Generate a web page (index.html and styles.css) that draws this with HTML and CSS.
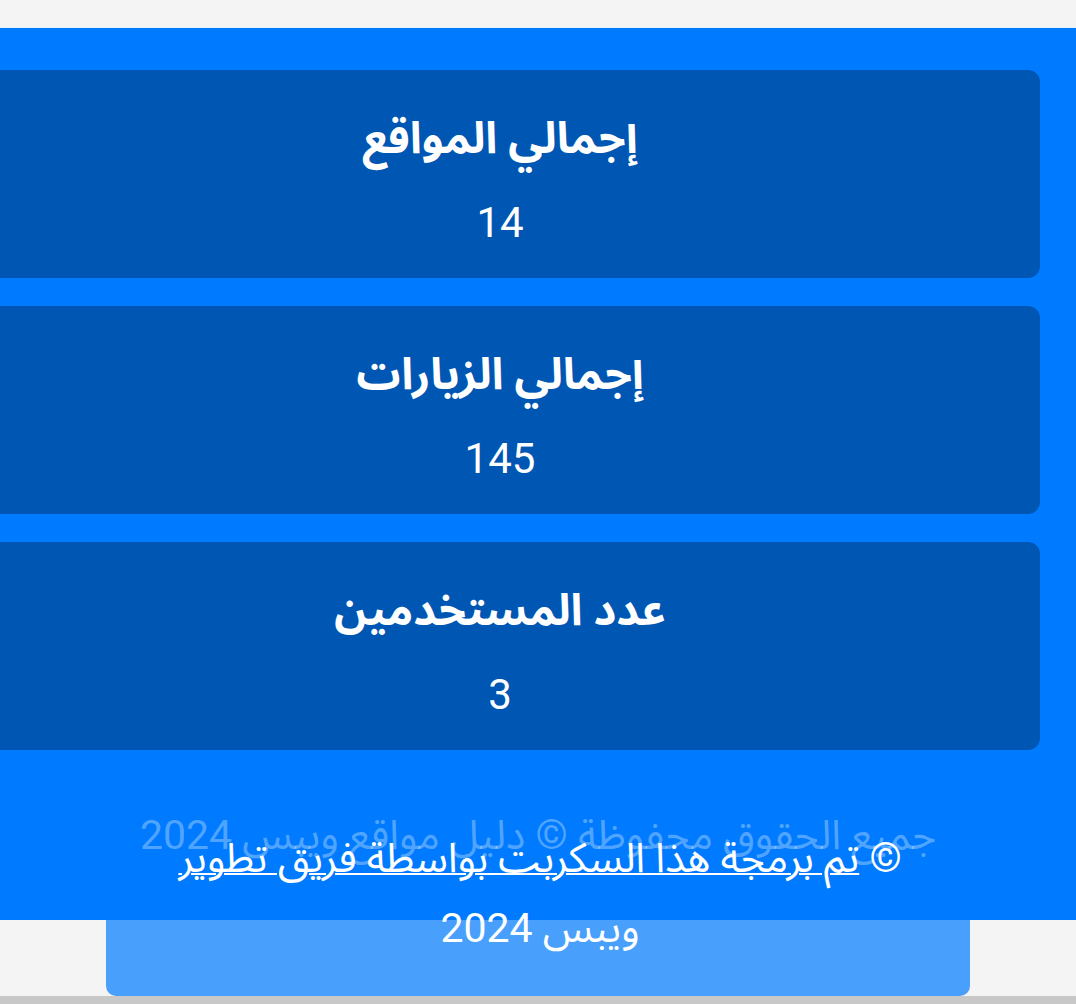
FILE: index.html
```html
<!DOCTYPE html>
<html lang="ar" dir="rtl">
<head>
<meta charset="utf-8">
<title>إحصائيات</title>
<link rel="stylesheet" href="styles.css">
</head>
<body>
<div class="topbar"></div>
<main class="stats">
  <div class="card">
    <h3 class="card-title">إجمالي المواقع</h3>
    <p class="card-value">14</p>
  </div>
  <div class="card">
    <h3 class="card-title">إجمالي الزيارات</h3>
    <p class="card-value">145</p>
  </div>
  <div class="card">
    <h3 class="card-title">عدد المستخدمين</h3>
    <p class="card-value">3</p>
  </div>
  <p class="rights">جميع الحقوق محفوظة © دليل مواقع ويبس 2024</p>
</main>
<div class="footer-wrap">
  <div class="footer-box"></div>
  <p class="credit">© <a href="#" class="credit-link">تم برمجة هذا السكربت بواسطة فريق تطوير</a> ويبس 2024</p>
</div>
<div class="bottombar"></div>
</body>
</html>
```

FILE: styles.css
```css
html, body {
  margin: 0;
  padding: 0;
}
body {
  background: #f4f4f4;
  font-family: Roboto, "Noto Sans Arabic", "Noto Naskh Arabic", "DejaVu Sans", sans-serif;
  color: #fff;
  overflow: hidden;
  height: 1004px;
}
.topbar {
  height: 27px;
  border-bottom: 1px solid #e4f2fa;
  background: #f4f4f4;
}
.stats {
  background: #007bff;
  padding: 42px 36px 0 0;
  height: 892px;
  box-sizing: border-box;
  display: flex;
  flex-direction: column;
  gap: 28px;
  overflow: hidden;
}
.card {
  background: #0056b3;
  border-radius: 12px;
  height: 208px;
  flex-shrink: 0;
  margin-left: -40px;
  display: flex;
  flex-direction: column;
  align-items: center;
  box-sizing: border-box;
  padding-top: 36px;
}
.card-title {
  margin: 0;
  font-size: 44px;
  font-weight: 700;
  line-height: 64px;
}
.card-value {
  margin: 28px 0 0;
  font-size: 42px;
  line-height: 50px;
}
.rights {
  margin: 32px -36px 0 0;
  text-align: center;
  font-size: 41px;
  line-height: 50px;
  color: rgba(255, 255, 255, 0.33);
}
.footer-wrap {
  position: relative;
  height: 76px;
  display: flex;
  justify-content: center;
}
.footer-box {
  width: 864px;
  height: 76px;
  background: rgba(0, 123, 255, 0.7);
  border-radius: 0 0 10px 10px;
}
.credit {
  position: absolute;
  left: 160px;
  right: 156px;
  top: -97px;
  margin: 0;
  text-align: center;
  font-size: 41px;
  line-height: 70px;
}
.credit-link {
  color: #fff;
  text-decoration: underline;
  text-decoration-thickness: 2px;
}
.bottombar {
  height: 8px;
  background: #c8c8c8;
}
```
